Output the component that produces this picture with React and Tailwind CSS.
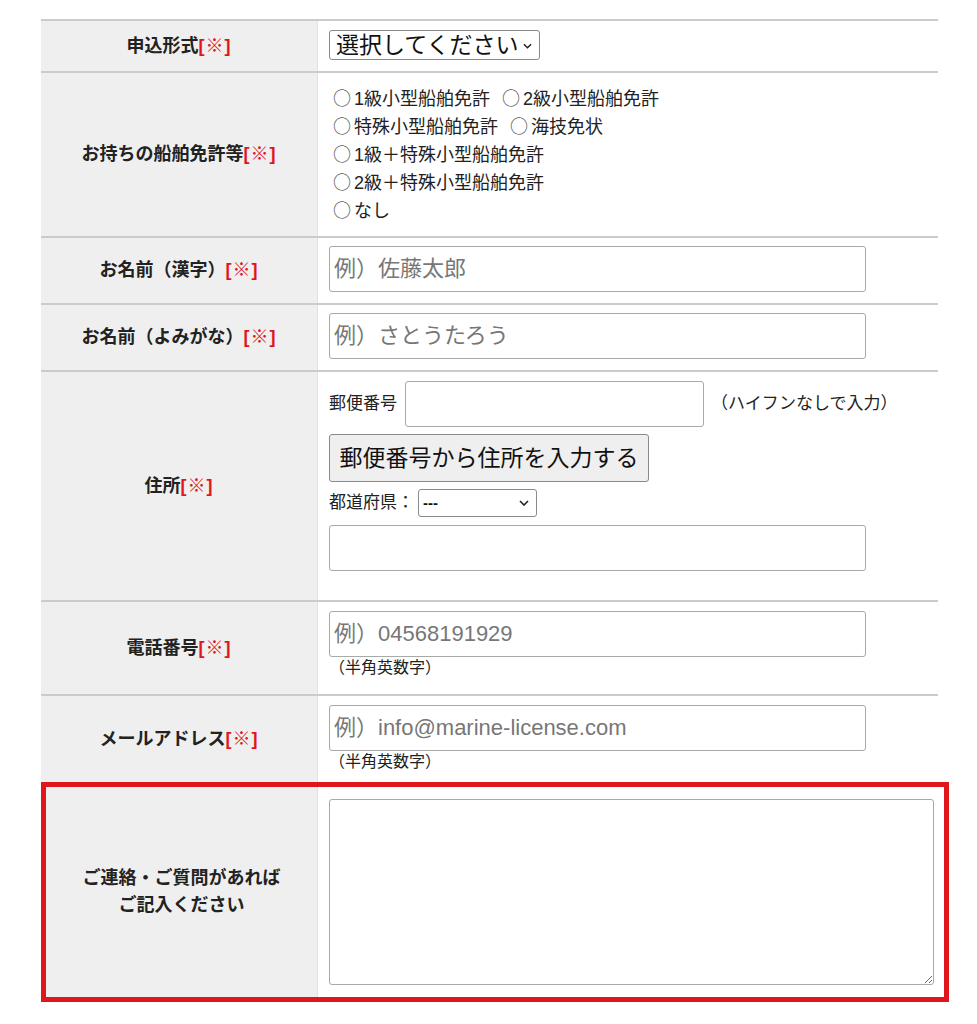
import { useState } from "react";

const FONT = { fontFamily: '"Liberation Sans", "Noto Sans CJK JP", sans-serif' };
const CJK = { fontFamily: '"Noto Sans CJK JP", sans-serif' };

const Req = () => <span className="text-[#e0161d] tracking-[1px]">[※]</span>;

const Chevron = ({ className }) => (
  <svg viewBox="0 0 10 6" className={className} fill="none" stroke="#222" strokeWidth="1.6">
    <path d="M1 1l4 4 4-4" />
  </svg>
);

const LICENSES = [
  ["1級小型船舶免許", "2級小型船舶免許"],
  ["特殊小型船舶免許", "海技免状"],
  ["1級＋特殊小型船舶免許"],
  ["2級＋特殊小型船舶免許"],
  ["なし"],
];

const Label = ({ children, className = "" }) => (
  <div
    className={`flex items-center justify-center bg-[#efefef] border-r border-[#e2e2e2] text-[18px] font-bold text-[#222] text-center leading-[27px] ${className}`}
  >
    <div>{children}</div>
  </div>
);

const TextInput = ({ placeholder, className = "w-[537px]" }) => (
  <input
    type="text"
    placeholder={placeholder}
    className={`h-[46px] ${className} border border-[#a9a9a9] rounded-[3px] bg-white px-[4px] text-[22px] text-[#333] placeholder:text-[#777] outline-none`}
  />
);

const Row = ({ label, children, cellClass = "" }) => (
  <div className="grid grid-cols-[277px_1fr] border-t-2 border-[#cbcbcb]">
    <Label>{label}</Label>
    <div className={`pl-[11px] pr-[10px] ${cellClass}`}>{children}</div>
  </div>
);

export default function App() {
  const [license, setLicense] = useState("");

  return (
    <div className="min-h-[1024px] bg-white pt-[19px] pl-[41px]" style={FONT}>
      <div className="w-[897px]">
        <Row label={<>申込形式<Req /></>} cellClass="pt-[9px] pb-[11px]">
          <div className="relative w-[211px] h-[30px]">
            <select className="appearance-none w-full h-full border border-[#8a8a8a] rounded-[3px] bg-white pl-[6px] pr-[22px] text-[23px] leading-[28px] text-[#111]">
              <option>選択してください</option>
              <option>受講申込</option>
              <option>資料請求</option>
            </select>
            <Chevron className="absolute right-[8px] top-[13px] w-[9px] h-[6px] pointer-events-none" />
          </div>
        </Row>

        <Row label={<>お持ちの船舶免許等<Req /></>} cellClass="pt-[10px] pb-[13px]">
          {LICENSES.map((line, i) => (
            <div key={i} className="h-[28px] pl-[4px] leading-[28px] text-[18px] text-[#222] whitespace-nowrap">
              {line.map((name) => (
                <span
                  key={name}
                  onClick={() => setLicense(name)}
                  className="inline-block mr-[12px] cursor-pointer"
                >
                  <span className="text-[#555] mr-[3px]" style={CJK}>
                    {license === name ? "●" : "○"}
                  </span>
                  {name}
                </span>
              ))}
            </div>
          ))}
        </Row>

        <Row label={<>お名前（漢字）<Req /></>} cellClass="pt-[8px] pb-[11px]">
          <TextInput placeholder="例）佐藤太郎" />
        </Row>

        <Row label={<>お名前（よみがな）<Req /></>} cellClass="pt-[8px] pb-[11px]">
          <TextInput placeholder="例）さとうたろう" />
        </Row>

        <Row label={<>住所<Req /></>} cellClass="pt-[9px] pb-[29px]">
          <div className="flex items-center h-[46px] text-[17px] text-[#222]">
            <span className="mr-[8px]">郵便番号</span>
            <TextInput className="w-[299px]" />
            <span className="ml-[7px]">（ハイフンなしで入力）</span>
          </div>
          <button className="mt-[7px] h-[48px] w-[320px] bg-[#efefef] border border-[#8a8a8a] rounded-[3px] text-[23px] text-[#111]">
            郵便番号から住所を入力する
          </button>
          <div className="mt-[7px] flex items-center h-[28px] text-[17px] text-[#222]">
            <span className="mr-[4px]">都道府県：</span>
            <div className="relative w-[119px] h-[28px]">
              <select className="appearance-none w-full h-full border border-[#8a8a8a] rounded-[3px] bg-white pl-[4px] text-[15px] font-bold text-[#111]">
                <option>---</option>
                <option>東京都</option>
                <option>神奈川県</option>
              </select>
              <Chevron className="absolute right-[8px] top-[11px] w-[10px] h-[6px] pointer-events-none" />
            </div>
          </div>
          <div className="mt-[8px]">
            <TextInput />
          </div>
        </Row>

        <Row label={<>電話番号<Req /></>} cellClass="pt-[9px] pb-[15px]">
          <TextInput placeholder="例）04568191929" />
          <div className="h-[22px] leading-[22px] text-[16px] text-[#222]">（半角英数字）</div>
        </Row>

        <Row label={<>メールアドレス<Req /></>} cellClass="pt-[9px] pb-[9px]">
          <TextInput placeholder="例）info@marine-license.com" />
          <div className="h-[22px] leading-[22px] text-[16px] text-[#222]">（半角英数字）</div>
        </Row>

        {/* message row, outlined in red */}
        <div className="grid grid-cols-[272px_1fr] w-[908px] border-[5px] border-[#e0161d]">
          <Label>
            ご連絡・ご質問があれば
            <br />
            ご記入ください
          </Label>
          <div className="pl-[11px] pr-[10px] py-[12px]">
            <textarea className="block w-[605px] h-[186px] border border-[#a9a9a9] rounded-[3px] bg-white outline-none" />
          </div>
        </div>
      </div>
    </div>
  );
}
